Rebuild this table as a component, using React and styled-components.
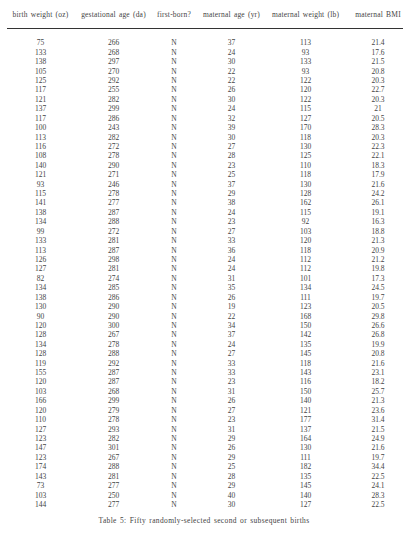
import React from 'react';
import styled, { createGlobalStyle } from 'styled-components';

const GlobalStyle = createGlobalStyle`
  html, body {
    margin: 0;
    padding: 0;
    background: #ffffff;
  }
  body {
    font-family: "Liberation Serif", "Times New Roman", serif;
    color: #444444;
  }
`;

const columns = [
  { title: 'birth weight (oz)', width: 67, offset: 0 },
  { title: 'gestational age (da)', width: 79, offset: 0 },
  { title: 'first-born?', width: 40, offset: 2 },
  { title: 'maternal age (yr)', width: 77, offset: 0 },
  { title: 'maternal weight (lb)', width: 71, offset: 0 },
  { title: 'maternal BMI', width: 62, offset: 12 },
];

const gridCols = columns.map((c) => `${c.width}px`).join(' ');

const births = [
  [75, 266, 'N', 37, 113, '21.4'],
  [133, 268, 'N', 24, 93, '17.6'],
  [138, 297, 'N', 30, 133, '21.5'],
  [105, 270, 'N', 22, 93, '20.8'],
  [125, 292, 'N', 22, 122, '20.3'],
  [117, 255, 'N', 26, 120, '22.7'],
  [121, 282, 'N', 30, 122, '20.3'],
  [137, 299, 'N', 24, 115, '21'],
  [117, 286, 'N', 32, 127, '20.5'],
  [100, 243, 'N', 39, 170, '28.3'],
  [113, 282, 'N', 30, 118, '20.3'],
  [116, 272, 'N', 27, 130, '22.3'],
  [108, 278, 'N', 28, 125, '22.1'],
  [140, 290, 'N', 23, 110, '18.3'],
  [121, 271, 'N', 25, 118, '17.9'],
  [93, 246, 'N', 37, 130, '21.6'],
  [115, 278, 'N', 29, 128, '24.2'],
  [141, 277, 'N', 38, 162, '26.1'],
  [138, 287, 'N', 24, 115, '19.1'],
  [134, 288, 'N', 23, 92, '16.3'],
  [99, 272, 'N', 27, 103, '18.8'],
  [133, 281, 'N', 33, 120, '21.3'],
  [113, 287, 'N', 36, 118, '20.9'],
  [126, 298, 'N', 24, 112, '21.2'],
  [127, 281, 'N', 24, 112, '19.8'],
  [82, 274, 'N', 31, 101, '17.3'],
  [134, 285, 'N', 35, 134, '24.5'],
  [138, 286, 'N', 26, 111, '19.7'],
  [130, 290, 'N', 19, 123, '20.5'],
  [90, 290, 'N', 22, 168, '29.8'],
  [120, 300, 'N', 34, 150, '26.6'],
  [128, 267, 'N', 37, 142, '26.8'],
  [134, 278, 'N', 24, 135, '19.9'],
  [128, 288, 'N', 27, 145, '20.8'],
  [119, 292, 'N', 33, 118, '21.6'],
  [155, 287, 'N', 33, 143, '23.1'],
  [120, 287, 'N', 23, 116, '18.2'],
  [103, 268, 'N', 31, 150, '25.7'],
  [166, 299, 'N', 26, 140, '21.3'],
  [120, 279, 'N', 27, 121, '23.6'],
  [110, 278, 'N', 23, 177, '31.4'],
  [127, 293, 'N', 31, 137, '21.5'],
  [123, 282, 'N', 29, 164, '24.9'],
  [147, 301, 'N', 26, 130, '21.6'],
  [123, 267, 'N', 29, 111, '19.7'],
  [174, 288, 'N', 25, 182, '34.4'],
  [143, 281, 'N', 28, 135, '22.5'],
  [73, 277, 'N', 29, 145, '24.1'],
  [103, 250, 'N', 40, 140, '28.3'],
  [144, 277, 'N', 30, 127, '22.5'],
];

export default function App() {
  return (
    <>
      <GlobalStyle />
      <Page>
        <Table>
          <HeadRow $cols={gridCols}>
            {columns.map((c) => (
              <HeadCell key={c.title} $offset={c.offset}>
                {c.title}
              </HeadCell>
            ))}
          </HeadRow>
          <Rule />
          <Body $cols={gridCols}>
            {births.map((row, r) =>
              row.map((value, i) => (
                <Cell key={`${r}-${i}`} $offset={columns[i].offset}>
                  {value}
                </Cell>
              ))
            )}
          </Body>
        </Table>
        <Caption>Table 5: Fifty randomly-selected second or subsequent births</Caption>
      </Page>
    </>
  );
}

const Page = styled.div`
  width: 408px;
  height: 541px;
  padding: 10.3px 5px 0 7px;
  box-sizing: border-box;
  display: flex;
  flex-direction: column;
  overflow: hidden;
`;

const Table = styled.div`
  display: flex;
  flex-direction: column;
  width: 396px;
`;

const HeadRow = styled.div`
  display: grid;
  grid-template-columns: ${(p) => p.$cols};
  height: 9.43px;
`;

const HeadCell = styled.div`
  font-size: 7.5px;
  line-height: 9.43px;
  letter-spacing: 0.2px;
  word-spacing: 1px;
  text-align: center;
  white-space: nowrap;
  padding-left: ${(p) => p.$offset}px;
`;

const Rule = styled.div`
  height: 1.4px;
  margin: 8.3px 0 8.9px;
  background: #333333;
`;

const Body = styled.div`
  display: grid;
  grid-template-columns: ${(p) => p.$cols};
  grid-auto-rows: 9.43px;
`;

const Cell = styled.div`
  font-size: 7.5px;
  line-height: 9.43px;
  text-align: center;
  white-space: nowrap;
  padding-left: ${(p) => p.$offset}px;
`;

const Caption = styled.div`
  align-self: center;
  margin: 7px 0 0 -2px;
  font-size: 7.5px;
  line-height: 10px;
  letter-spacing: 0.35px;
  word-spacing: 1px;
  white-space: nowrap;
`;
